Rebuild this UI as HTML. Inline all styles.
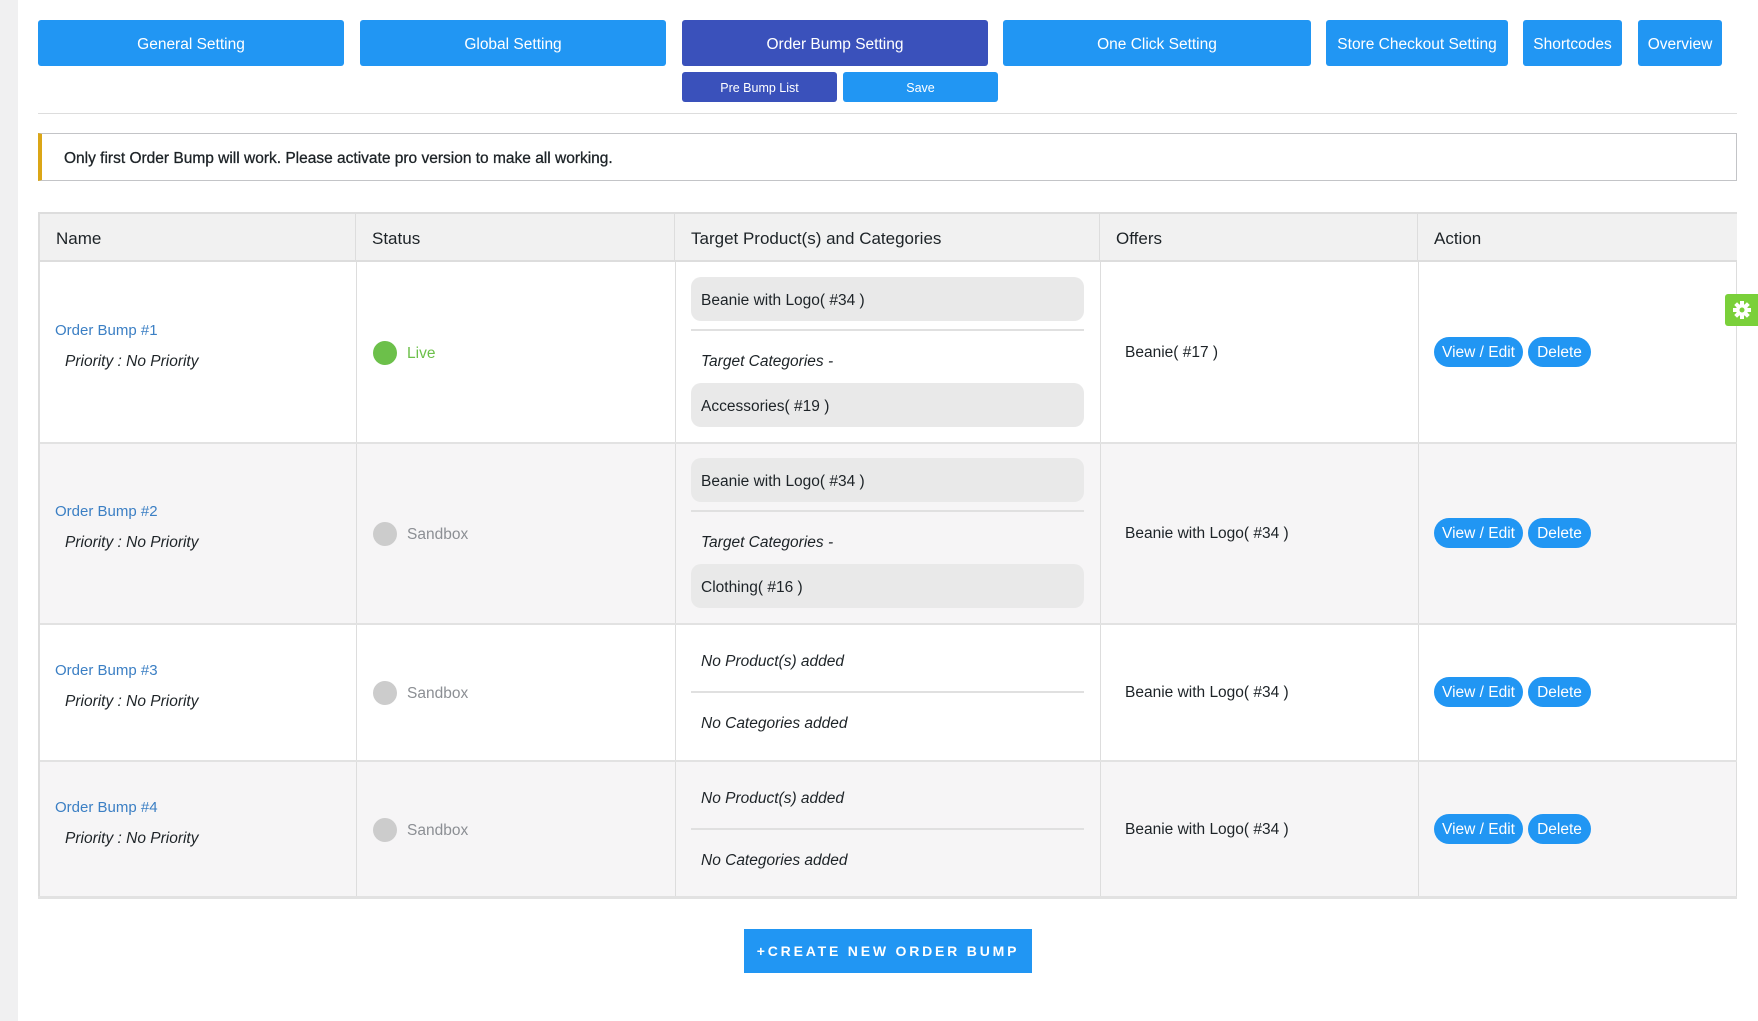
<!DOCTYPE html>
<html><head><meta charset="utf-8"><style>
*{box-sizing:border-box;margin:0;padding:0}
body{width:1758px;height:1021px;background:#fff;font-family:"Liberation Sans",sans-serif;color:#1d2327;position:relative;overflow:hidden}
.a{position:absolute}
.btn{position:absolute;background:#2196f3;color:#fff;border-radius:3px;font-size:15.5px;display:flex;align-items:center;justify-content:center;white-space:nowrap;padding-top:3px}
.dk{background:#3a51bb}
.cell{position:absolute;border-right:1px solid #ddd;border-bottom:1px solid #ddd}
.hd{background:#f1f1f1;font-size:17px;padding-left:16px;padding-top:3px;display:flex;align-items:center;border-bottom:2px solid #ddd}
.t{position:absolute;font-size:15.5px;white-space:nowrap;margin-top:2px}
.pill{position:absolute;left:691px;width:393px;height:44px;background:#e9e9e9;border-radius:10px;font-size:15.5px;padding-left:10px;padding-top:3px;display:flex;align-items:center}
.ln{position:absolute;left:691px;width:393px;height:2px;background:#e0e0e0}
.dot{position:absolute;left:373px;width:24px;height:24px;border-radius:50%;background:#ccc}
.pb{position:absolute;height:30px;background:#2196f3;color:#fff;border-radius:15px;font-size:15.5px;display:flex;align-items:center;justify-content:center;padding-top:2px}
.nm{position:absolute;left:55px;color:#3b7fc4;font-size:15px;margin-top:2px}
.pr{position:absolute;left:65px;font-style:italic;font-size:15.5px;margin-top:2px}
</style></head><body>
<div class="a" style="left:0;top:0;width:18px;height:1021px;background:#f0f0f1"></div>
<div class="btn" style="left:38px;top:20px;width:306px;height:46px">General Setting</div>
<div class="btn" style="left:360px;top:20px;width:306px;height:46px">Global Setting</div>
<div class="btn dk" style="left:682px;top:20px;width:306px;height:46px">Order Bump Setting</div>
<div class="btn" style="left:1003px;top:20px;width:308px;height:46px">One Click Setting</div>
<div class="btn" style="left:1326px;top:20px;width:182px;height:46px">Store Checkout Setting</div>
<div class="btn" style="left:1523px;top:20px;width:99px;height:46px">Shortcodes</div>
<div class="btn" style="left:1638px;top:20px;width:84px;height:46px">Overview</div>
<div class="btn dk" style="left:682px;top:72px;width:155px;height:30px;font-size:12.5px;padding-top:2px">Pre Bump List</div>
<div class="btn" style="left:843px;top:72px;width:155px;height:30px;font-size:12.5px;padding-top:2px">Save</div>
<div class="a" style="left:38px;top:113px;width:1699px;height:1px;background:#ddd"></div>
<div class="a" style="left:38px;top:133px;width:1699px;height:48px;border:1px solid #c3c4c7;border-left:4px solid #dba617;font-size:15.5px;padding-left:22px;padding-top:3px;display:flex;align-items:center;-webkit-text-stroke:0.3px #1d2327">Only first Order Bump will work. Please activate pro version to make all working.</div>

<div class="a" style="left:38px;top:212px;width:1699px;height:686px;border-left:2px solid #ddd;border-top:2px solid #ddd;border-right:1px solid #ddd"></div>
<div class="a" style="left:40px;top:443px;width:1696px;height:180px;background:#f6f5f6"></div>
<div class="a" style="left:40px;top:761px;width:1696px;height:136px;background:#f6f5f6"></div>
<div class="cell hd" style="left:40px;top:214px;width:316px;height:48px">Name</div>
<div class="cell hd" style="left:356px;top:214px;width:319px;height:48px">Status</div>
<div class="cell hd" style="left:675px;top:214px;width:425px;height:48px">Target Product(s) and Categories</div>
<div class="cell hd" style="left:1100px;top:214px;width:318px;height:48px">Offers</div>
<div class="cell hd" style="left:1418px;top:214px;width:319px;height:48px;border-right:none">Action</div>
<div class="a" style="left:356px;top:262px;width:1px;height:636px;background:#ddd"></div>
<div class="a" style="left:675px;top:262px;width:1px;height:636px;background:#ddd"></div>
<div class="a" style="left:1100px;top:262px;width:1px;height:636px;background:#ddd"></div>
<div class="a" style="left:1418px;top:262px;width:1px;height:636px;background:#ddd"></div>
<div class="a" style="left:40px;top:442px;width:1697px;height:2px;background:#e2e2e2"></div>
<div class="a" style="left:40px;top:623px;width:1697px;height:2px;background:#e2e2e2"></div>
<div class="a" style="left:40px;top:760px;width:1697px;height:2px;background:#e2e2e2"></div>
<div class="a" style="left:38px;top:896px;width:1699px;height:3px;background:#e2e2e2"></div>

<div class="nm" style="top:320px">Order Bump #1</div>
<div class="pr" style="top:351px">Priority : No Priority</div>
<div class="dot" style="top:341px;background:#6cc04a"></div>
<div class="t" style="left:407px;top:343px;color:#6cc04a">Live</div>
<div class="pill" style="top:277px">Beanie with Logo( #34 )</div>
<div class="ln" style="top:329px"></div>
<div class="t" style="left:701px;top:351px;font-style:italic">Target Categories -</div>
<div class="pill" style="top:383px">Accessories( #19 )</div>
<div class="t" style="left:1125px;top:342px">Beanie( #17 )</div>
<div class="pb" style="left:1434px;top:337px;width:89px">View / Edit</div>
<div class="pb" style="left:1528px;top:337px;width:63px">Delete</div>

<div class="nm" style="top:501px">Order Bump #2</div>
<div class="pr" style="top:532px">Priority : No Priority</div>
<div class="dot" style="top:522px"></div>
<div class="t" style="left:407px;top:524px;color:#8c8f94">Sandbox</div>
<div class="pill" style="top:458px">Beanie with Logo( #34 )</div>
<div class="ln" style="top:510px"></div>
<div class="t" style="left:701px;top:532px;font-style:italic">Target Categories -</div>
<div class="pill" style="top:564px">Clothing( #16 )</div>
<div class="t" style="left:1125px;top:523px">Beanie with Logo( #34 )</div>
<div class="pb" style="left:1434px;top:518px;width:89px">View / Edit</div>
<div class="pb" style="left:1528px;top:518px;width:63px">Delete</div>

<div class="nm" style="top:660px">Order Bump #3</div>
<div class="pr" style="top:691px">Priority : No Priority</div>
<div class="dot" style="top:681px"></div>
<div class="t" style="left:407px;top:683px;color:#8c8f94">Sandbox</div>
<div class="t" style="left:701px;top:651px;font-style:italic">No Product(s) added</div>
<div class="ln" style="top:691px"></div>
<div class="t" style="left:701px;top:713px;font-style:italic">No Categories added</div>
<div class="t" style="left:1125px;top:682px">Beanie with Logo( #34 )</div>
<div class="pb" style="left:1434px;top:677px;width:89px">View / Edit</div>
<div class="pb" style="left:1528px;top:677px;width:63px">Delete</div>

<div class="nm" style="top:797px">Order Bump #4</div>
<div class="pr" style="top:828px">Priority : No Priority</div>
<div class="dot" style="top:818px"></div>
<div class="t" style="left:407px;top:820px;color:#8c8f94">Sandbox</div>
<div class="t" style="left:701px;top:788px;font-style:italic">No Product(s) added</div>
<div class="ln" style="top:828px"></div>
<div class="t" style="left:701px;top:850px;font-style:italic">No Categories added</div>
<div class="t" style="left:1125px;top:819px">Beanie with Logo( #34 )</div>
<div class="pb" style="left:1434px;top:814px;width:89px">View / Edit</div>
<div class="pb" style="left:1528px;top:814px;width:63px">Delete</div>

<div class="a" style="left:744px;top:929px;width:288px;height:44px;background:#2196f3;color:#fff;font-weight:bold;font-size:14px;letter-spacing:2.8px;display:flex;align-items:center;justify-content:center">+CREATE NEW ORDER BUMP</div>

<div class="a" style="left:1725px;top:294px;width:33px;height:32px;background:#7ad03a;border-radius:3px 0 0 3px;display:flex;align-items:center;justify-content:center">
<svg width="20" height="20" viewBox="0 0 20 20"><g fill="#fff"><circle cx="10" cy="10" r="6"/><rect x="8" y="1" width="4" height="18"/><rect x="1" y="8" width="18" height="4"/><rect x="8" y="1" width="4" height="18" transform="rotate(45 10 10)"/><rect x="8" y="1" width="4" height="18" transform="rotate(-45 10 10)"/></g><circle cx="10" cy="10" r="2.5" fill="#7ad03a"/></svg></div>
</body></html>
